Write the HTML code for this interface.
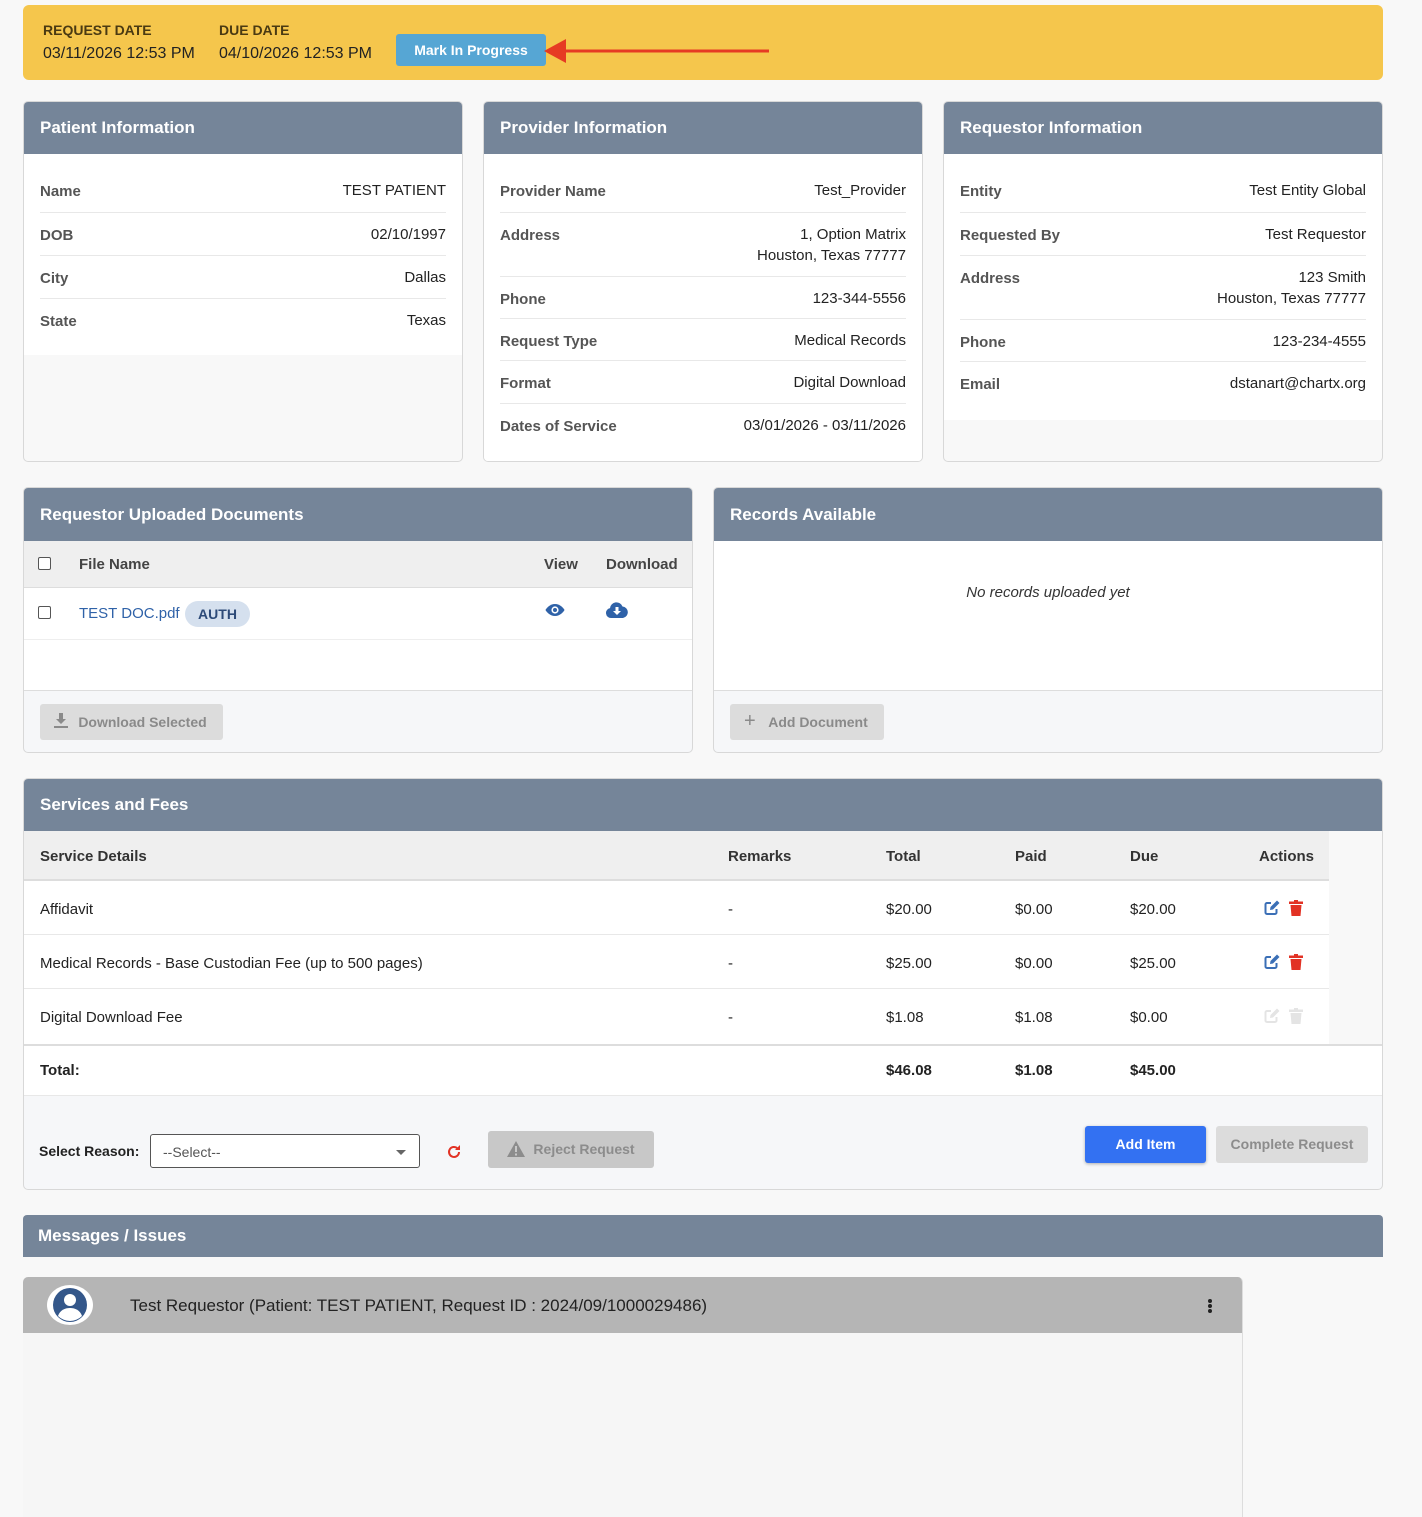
<!DOCTYPE html>
<html><head><meta charset="utf-8"><style>
*{box-sizing:border-box;margin:0;padding:0}
body{width:1422px;height:1500px;background:#f8f8f8;font-family:"Liberation Sans",Arial,sans-serif;color:#222;position:relative;overflow:hidden;font-size:15px}
.a{position:absolute}
.card{position:absolute;background:#f8f8f8;border:1px solid #d8d8d8;border-radius:5px;overflow:hidden}
.hd{position:absolute;left:0;right:0;top:0;background:#758599;color:#fff;font-weight:bold;font-size:17px;padding-left:16px}
.body{position:absolute;left:0;right:0;background:#fff}
.row{position:absolute;left:16px;right:16px;border-bottom:1px solid #e8e8e8}
.lb{position:absolute;left:0;font-weight:bold;color:#555}
.vl{position:absolute;right:0;text-align:right;line-height:21px}
.btn{position:absolute;border-radius:3px;font-weight:bold;font-size:14px;text-align:center}
</style></head><body>

<!-- Banner -->
<div class="a" style="left:23px;top:5px;width:1360px;height:75px;background:#f5c64c;border-radius:6px"></div>
<div class="a" style="left:43px;top:22px;font-size:14px;font-weight:bold;color:#4a3a12">REQUEST DATE</div>
<div class="a" style="left:43px;top:45px;font-size:16px;color:#222">03/11/2026 12:53 PM</div>
<div class="a" style="left:219px;top:22px;font-size:14px;font-weight:bold;color:#4a3a12">DUE DATE</div>
<div class="a" style="left:219px;top:45px;font-size:16px;color:#222">04/10/2026 12:53 PM</div>
<div class="btn" style="left:396px;top:34px;width:150px;height:32px;background:#56a6d4;color:#fff;line-height:32px;font-size:14px">Mark In Progress</div>
<svg class="a" style="left:540px;top:36px" width="232" height="30"><line x1="20" y1="15" x2="229" y2="15" stroke="#e63a23" stroke-width="3"/><polygon points="4,15 26,3 26,27" fill="#e63a23"/></svg>

<!-- Patient -->
<div class="card" style="left:23px;top:101px;width:440px;height:361px">
<div class="hd" style="height:52px;line-height:52px">Patient Information</div>
<div class="body" style="top:52px;height:201px">
<div class="row" style="top:0;height:59px"><div class="lb" style="top:29px">Name</div><div class="vl" style="top:26px">TEST PATIENT</div></div>
<div class="row" style="top:59px;height:43px"><div class="lb" style="top:14px">DOB</div><div class="vl" style="top:11px">02/10/1997</div></div>
<div class="row" style="top:102px;height:43px"><div class="lb" style="top:14px">City</div><div class="vl" style="top:11px">Dallas</div></div>
<div class="row" style="top:145px;height:56px;border:none"><div class="lb" style="top:14px">State</div><div class="vl" style="top:11px">Texas</div></div>
</div></div>

<!-- Provider -->
<div class="card" style="left:483px;top:101px;width:440px;height:361px">
<div class="hd" style="height:52px;line-height:52px">Provider Information</div>
<div class="body" style="top:52px;bottom:0">
<div class="row" style="top:0;height:59px"><div class="lb" style="top:29px">Provider Name</div><div class="vl" style="top:26px">Test_Provider</div></div>
<div class="row" style="top:59px;height:64px"><div class="lb" style="top:14px">Address</div><div class="vl" style="top:11px">1, Option Matrix<br>Houston, Texas 77777</div></div>
<div class="row" style="top:123px;height:42px"><div class="lb" style="top:14px">Phone</div><div class="vl" style="top:11px">123-344-5556</div></div>
<div class="row" style="top:165px;height:42px"><div class="lb" style="top:14px">Request Type</div><div class="vl" style="top:11px">Medical Records</div></div>
<div class="row" style="top:207px;height:43px"><div class="lb" style="top:14px">Format</div><div class="vl" style="top:11px">Digital Download</div></div>
<div class="row" style="top:250px;height:50px;border:none"><div class="lb" style="top:14px">Dates of Service</div><div class="vl" style="top:11px">03/01/2026 - 03/11/2026</div></div>
</div></div>

<!-- Requestor -->
<div class="card" style="left:943px;top:101px;width:440px;height:361px">
<div class="hd" style="height:52px;line-height:52px">Requestor Information</div>
<div class="body" style="top:52px;height:266px">
<div class="row" style="top:0;height:59px"><div class="lb" style="top:29px">Entity</div><div class="vl" style="top:26px">Test Entity Global</div></div>
<div class="row" style="top:59px;height:43px"><div class="lb" style="top:14px">Requested By</div><div class="vl" style="top:11px">Test Requestor</div></div>
<div class="row" style="top:102px;height:64px"><div class="lb" style="top:14px">Address</div><div class="vl" style="top:11px">123 Smith<br>Houston, Texas 77777</div></div>
<div class="row" style="top:166px;height:42px"><div class="lb" style="top:14px">Phone</div><div class="vl" style="top:11px">123-234-4555</div></div>
<div class="row" style="top:208px;height:58px;border:none"><div class="lb" style="top:14px">Email</div><div class="vl" style="top:11px">dstanart@chartx.org</div></div>
</div></div>

<!-- Uploaded docs -->
<div class="card" style="left:23px;top:487px;width:670px;height:266px;background:#f6f7f9">
<div class="hd" style="height:53px;line-height:53px">Requestor Uploaded Documents</div>
<div class="a" style="left:0;right:0;top:53px;height:47px;background:#efefef;border-bottom:1px solid #ddd"></div>
<div class="a" style="left:14px;top:69px;width:13px;height:13px;border:1px solid #555;border-radius:2px;background:#fff"></div>
<div class="a" style="left:55px;top:68px;font-weight:bold;color:#444">File Name</div>
<div class="a" style="left:520px;top:68px;font-weight:bold;color:#444">View</div>
<div class="a" style="left:582px;top:68px;font-weight:bold;color:#444">Download</div>
<div class="a" style="left:0;right:0;top:100px;height:103px;background:#fff;border-bottom:1px solid #ddd"></div>
<div class="a" style="left:0;right:0;top:151px;border-top:1px solid #eee"></div>
<div class="a" style="left:14px;top:118px;width:13px;height:13px;border:1px solid #555;border-radius:2px;background:#fff"></div>
<div class="a" style="left:55px;top:117px;color:#2f62a8">TEST DOC.pdf</div>
<div class="a" style="left:161px;top:113px;width:65px;height:26px;border-radius:13px;background:#d5e0ee;color:#2d4a78;font-weight:bold;font-size:14px;line-height:26px;text-align:center">AUTH</div>
<svg class="a" style="left:521px;top:115px" width="20" height="14" viewBox="0 0 20 14"><path d="M10 1C5 1 1.5 5 0.5 7 1.5 9 5 13 10 13s8.5-4 9.5-6C18.5 5 15 1 10 1z" fill="#2f62a8"/><circle cx="10" cy="7" r="3.6" fill="#fff"/><circle cx="10" cy="7" r="2" fill="#2f62a8"/></svg>
<svg class="a" style="left:582px;top:114px" width="22" height="16" viewBox="0 0 22 16"><path d="M5 16a5 5 0 0 1-1-9.9A6.5 6.5 0 0 1 16.5 4.5 5.8 5.8 0 0 1 17 16z" fill="#2f62a8"/><path d="M9.5 5h3v4h2.5l-4 4-4-4h2.5z" fill="#fff"/></svg>
<div class="btn" style="left:16px;top:216px;width:183px;height:36px;background:#dcdcdc;color:#8a8a8a;line-height:36px;padding-left:22px">Download Selected</div>
<svg class="a" style="left:30px;top:225px" width="14" height="16" viewBox="0 0 14 16"><path d="M5 0h4v6h3l-5 5-5-5h3z" fill="#8a8a8a"/><rect x="0" y="13" width="14" height="2" fill="#8a8a8a"/></svg>
</div>

<!-- Records available -->
<div class="card" style="left:713px;top:487px;width:670px;height:266px;background:#f6f7f9">
<div class="hd" style="height:53px;line-height:53px">Records Available</div>
<div class="a" style="left:0;right:0;top:53px;height:150px;background:#fff;border-bottom:1px solid #ddd"></div>
<div class="a" style="left:0;right:0;top:96px;text-align:center;font-style:italic;color:#333">No records uploaded yet</div>
<div class="btn" style="left:16px;top:216px;width:154px;height:36px;background:#dcdcdc;color:#8a8a8a;line-height:36px;padding-left:22px">Add Document</div>
<div class="a" style="left:30px;top:222px;color:#8a8a8a;font-size:20px">+</div>
</div>

<!-- Services -->
<div class="card" style="left:23px;top:778px;width:1360px;height:412px;background:#f6f7f9">
<div class="hd" style="height:52px;line-height:52px">Services and Fees</div>
<div class="a" style="left:0;top:52px;width:1305px;height:50px;background:#efefef;border-bottom:2px solid #ddd"></div>
<div class="a" style="left:1305px;top:52px;right:0;height:213px;background:#f8f8f8"></div>
<div class="a" style="left:16px;top:69px;font-weight:bold;color:#333">Service Details</div>
<div class="a" style="left:704px;top:69px;font-weight:bold;color:#333">Remarks</div>
<div class="a" style="left:862px;top:69px;font-weight:bold;color:#333">Total</div>
<div class="a" style="left:991px;top:69px;font-weight:bold;color:#333">Paid</div>
<div class="a" style="left:1106px;top:69px;font-weight:bold;color:#333">Due</div>
<div class="a" style="left:1235px;top:69px;font-weight:bold;color:#333">Actions</div>

<div class="a" style="left:0;top:102px;width:1305px;height:54px;background:#fff;border-bottom:1px solid #e8e8e8"></div>
<div class="a" style="left:0;top:156px;width:1305px;height:54px;background:#fff;border-bottom:1px solid #e8e8e8"></div>
<div class="a" style="left:0;top:210px;width:1305px;height:55px;background:#fff"></div>
<div class="a" style="left:0;right:0;top:265px;height:52px;background:#fff;border-top:2px solid #ddd;border-bottom:1px solid #e8e8e8"></div>

<div class="a" style="left:16px;top:122px">Affidavit</div><div class="a" style="left:704px;top:122px">-</div><div class="a" style="left:862px;top:122px">$20.00</div><div class="a" style="left:991px;top:122px">$0.00</div><div class="a" style="left:1106px;top:122px">$20.00</div>
<div class="a" style="left:16px;top:176px">Medical Records - Base Custodian Fee (up to 500 pages)</div><div class="a" style="left:704px;top:176px">-</div><div class="a" style="left:862px;top:176px">$25.00</div><div class="a" style="left:991px;top:176px">$0.00</div><div class="a" style="left:1106px;top:176px">$25.00</div>
<div class="a" style="left:16px;top:230px">Digital Download Fee</div><div class="a" style="left:704px;top:230px">-</div><div class="a" style="left:862px;top:230px">$1.08</div><div class="a" style="left:991px;top:230px">$1.08</div><div class="a" style="left:1106px;top:230px">$0.00</div>
<div class="a" style="left:16px;top:283px;font-weight:bold">Total:</div><div class="a" style="left:862px;top:283px;font-weight:bold">$46.08</div><div class="a" style="left:991px;top:283px;font-weight:bold">$1.08</div><div class="a" style="left:1106px;top:283px;font-weight:bold">$45.00</div>

<svg class="a" style="left:1240px;top:121px" width="16" height="16" viewBox="0 0 16 16"><path d="M7 3H3a1.5 1.5 0 0 0-1.5 1.5v8A1.5 1.5 0 0 0 3 14h8a1.5 1.5 0 0 0 1.5-1.5V9" fill="none" stroke="#3b6fb6" stroke-width="2"/><path d="M6 10l0.5-3 6.5-6.5 2.5 2.5-6.5 6.5z" fill="#3b6fb6"/></svg>
<svg class="a" style="left:1265px;top:121px" width="14" height="16" viewBox="0 0 14 16"><rect x="0" y="1.5" width="14" height="2.5" fill="#e23224"/><rect x="5" y="0" width="4" height="2" fill="#e23224"/><path d="M1.5 5h11l-1 11h-9z" fill="#e23224"/></svg>
<svg class="a" style="left:1240px;top:175px" width="16" height="16" viewBox="0 0 16 16"><path d="M7 3H3a1.5 1.5 0 0 0-1.5 1.5v8A1.5 1.5 0 0 0 3 14h8a1.5 1.5 0 0 0 1.5-1.5V9" fill="none" stroke="#3b6fb6" stroke-width="2"/><path d="M6 10l0.5-3 6.5-6.5 2.5 2.5-6.5 6.5z" fill="#3b6fb6"/></svg>
<svg class="a" style="left:1265px;top:175px" width="14" height="16" viewBox="0 0 14 16"><rect x="0" y="1.5" width="14" height="2.5" fill="#e23224"/><rect x="5" y="0" width="4" height="2" fill="#e23224"/><path d="M1.5 5h11l-1 11h-9z" fill="#e23224"/></svg>
<svg class="a" style="left:1240px;top:229px" width="16" height="16" viewBox="0 0 16 16"><path d="M7 3H3a1.5 1.5 0 0 0-1.5 1.5v8A1.5 1.5 0 0 0 3 14h8a1.5 1.5 0 0 0 1.5-1.5V9" fill="none" stroke="#e4e4e4" stroke-width="2"/><path d="M6 10l0.5-3 6.5-6.5 2.5 2.5-6.5 6.5z" fill="#e4e4e4"/></svg>
<svg class="a" style="left:1265px;top:229px" width="14" height="16" viewBox="0 0 14 16"><rect x="0" y="1.5" width="14" height="2.5" fill="#e4e4e4"/><rect x="5" y="0" width="4" height="2" fill="#e4e4e4"/><path d="M1.5 5h11l-1 11h-9z" fill="#e4e4e4"/></svg>

<div class="a" style="left:15px;top:364px;font-weight:bold;font-size:14px;color:#222">Select Reason:</div>
<div class="a" style="left:126px;top:355px;width:270px;height:34px;border:1px solid #555;border-radius:3px;background:#fff;font-size:14px;color:#555;line-height:34px;padding-left:12px">--Select--</div>
<div class="a" style="left:372px;top:371px;width:0;height:0;border-left:5px solid transparent;border-right:5px solid transparent;border-top:5px solid #666"></div>
<svg class="a" style="left:422px;top:365px" width="16" height="16" viewBox="0 0 16 16"><path d="M13 8a5 5 0 1 1-1.6-3.7" fill="none" stroke="#e23224" stroke-width="2"/><path d="M14 1v5h-5z" fill="#e23224"/></svg>
<div class="btn" style="left:464px;top:352px;width:166px;height:37px;background:#c8c8c8;color:#8c8c8c;line-height:37px;padding-left:26px">Reject Request</div>
<svg class="a" style="left:483px;top:362px" width="18" height="16" viewBox="0 0 18 16"><path d="M9 0l9 16H0z" fill="#8c8c8c"/><rect x="8" y="5" width="2" height="6" fill="#c8c8c8"/><rect x="8" y="12.5" width="2" height="2" fill="#c8c8c8"/></svg>
<div class="btn" style="left:1061px;top:347px;width:121px;height:37px;background:#3371f2;color:#fff;line-height:37px;box-shadow:0 1px 3px rgba(0,0,0,.3)">Add Item</div>
<div class="btn" style="left:1192px;top:347px;width:152px;height:37px;background:#dcdcdc;color:#8c8c8c;line-height:37px">Complete Request</div>
</div>

<!-- Messages -->
<div class="a" style="left:23px;top:1215px;width:1360px;height:42px;background:#758599;border-radius:4px 4px 0 0;color:#fff;font-weight:bold;font-size:17px;line-height:42px;padding-left:15px">Messages / Issues</div>
<div class="a" style="left:23px;top:1277px;width:1220px;height:240px;background:#f6f6f6;border-right:1px solid #ddd;border-radius:5px 5px 0 0;overflow:hidden">
<div class="a" style="left:0;right:0;top:0;height:56px;background:#b5b5b5"></div>
<svg class="a" style="left:24px;top:8px" width="46" height="40" viewBox="0 0 46 40"><ellipse cx="23" cy="20" rx="23" ry="20" fill="#fff"/><circle cx="23" cy="20" r="17" fill="#34578a"/><circle cx="23" cy="15" r="6" fill="#fff"/><path d="M11 31c2-6 7-8 12-8s10 2 12 8a17 17 0 0 1-24 0z" fill="#fff"/></svg>
<div class="a" style="left:107px;top:19px;font-size:17px;color:#222">Test Requestor (Patient: TEST PATIENT, Request ID : 2024/09/1000029486)</div>
<div class="a" style="left:1185px;top:22px;width:4px;height:4px;border-radius:2px;background:#222"></div>
<div class="a" style="left:1185px;top:27px;width:4px;height:4px;border-radius:2px;background:#222"></div>
<div class="a" style="left:1185px;top:32px;width:4px;height:4px;border-radius:2px;background:#222"></div>
</div>
</body></html>
